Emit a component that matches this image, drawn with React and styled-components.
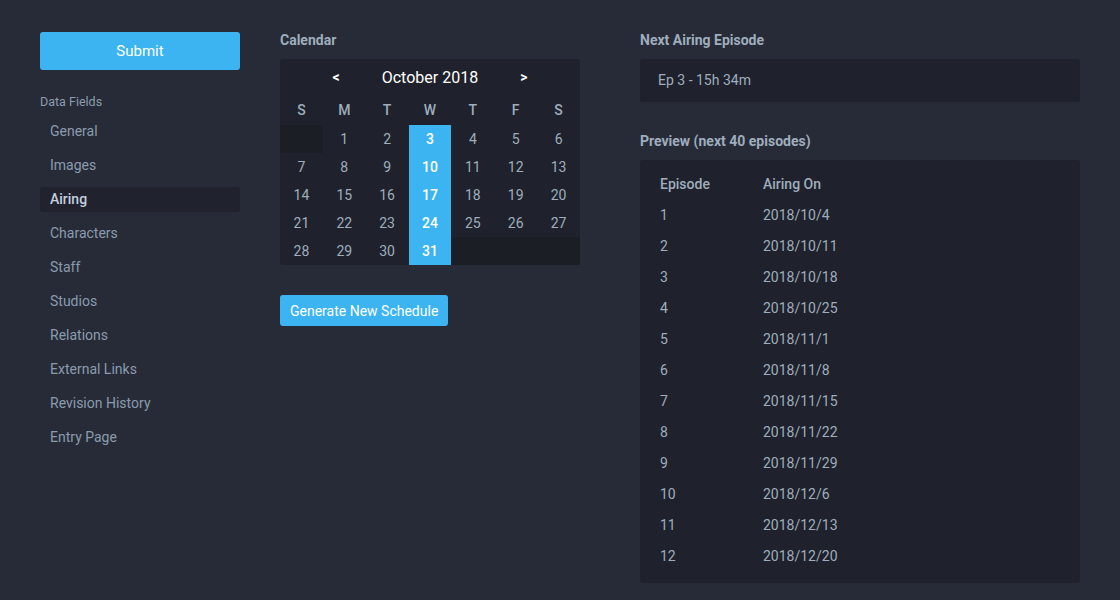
import React from "react";
import styled, { createGlobalStyle } from "styled-components";

const GlobalStyle = createGlobalStyle`
  body {
    margin: 0;
    background: #272b37;
    font-family: Roboto, "Liberation Sans", sans-serif;
    color: #9fadbd;
  }
`;

const Page = styled.div`
  display: flex;
  align-items: flex-start;
  padding: 32px 40px 0;
  height: 600px;
  box-sizing: border-box;
`;

const Column = styled.div`
  display: flex;
  flex-direction: column;
  width: ${(p) => p.$w};
  margin-right: ${(p) => p.$mr || "0"};
  flex-shrink: 0;
`;

const BlueButton = styled.button`
  border: none;
  background: #3db4f2;
  color: #fff;
  font-family: inherit;
  border-radius: 3px;
  cursor: pointer;
  font-size: ${(p) => (p.$big ? "15px" : "14px")};
  height: ${(p) => (p.$big ? "38px" : "31px")};
  padding: 0 10px;
  width: ${(p) => (p.$big ? "100%" : "auto")};
  align-self: flex-start;
`;

const SectionLabel = styled.div`
  font-size: 12.5px;
  margin: 24px 0 10px;
  color: #8a9bae;
`;

const NavItem = styled.div`
  height: 25px;
  line-height: 25px;
  margin-bottom: 9px;
  padding-left: 10px;
  font-size: 14px;
  border-radius: 3px;
  color: ${(p) => (p.$active ? "#c6cfe0" : "#8a9bae")};
  font-weight: ${(p) => (p.$active ? 500 : 400)};
  background: ${(p) => (p.$active ? "#20232d" : "transparent")};
`;

const Heading = styled.div`
  font-size: 14px;
  font-weight: 700;
  color: #9fadbd;
  height: 17px;
  line-height: 17px;
  margin-bottom: 10px;
`;

const Calendar = styled.div`
  background: #1f222c;
  border-radius: 3px;
  overflow: hidden;
  margin-bottom: 30px;
`;

const CalHeader = styled.div`
  display: flex;
  align-items: center;
  justify-content: center;
  height: 36px;
  color: #fff;
  font-size: 16px;
  gap: 42px;
`;

const Arrow = styled.span`
  font-weight: 700;
  font-size: 14px;
`;

const Grid = styled.div`
  display: grid;
  grid-template-columns: repeat(7, 1fr);
`;

const DayName = styled.div`
  height: 30px;
  line-height: 30px;
  text-align: center;
  font-size: 14px;
  font-weight: 500;
`;

const Cell = styled.div`
  height: 28px;
  line-height: 28px;
  text-align: center;
  font-size: 14px;
  background: ${(p) => (p.$hl ? "#3db4f2" : p.$empty ? "#1b1e25" : "transparent")};
  color: ${(p) => (p.$hl ? "#fff" : "#9fadbd")};
  font-weight: ${(p) => (p.$hl ? 500 : 400)};
`;

const Card = styled.div`
  background: #1f222c;
  border-radius: 3px;
  padding: ${(p) => p.$pad};
  margin-bottom: ${(p) => p.$mb || "0"};
  font-size: 14px;
  line-height: 19px;
`;

const Row = styled.div`
  display: grid;
  grid-template-columns: 103px 1fr;
  height: 31px;
  line-height: 31px;
  font-size: 14px;
  font-weight: ${(p) => (p.$head ? 500 : 400)};
`;

const navItems = [
  "General",
  "Images",
  "Airing",
  "Characters",
  "Staff",
  "Studios",
  "Relations",
  "External Links",
  "Revision History",
  "Entry Page",
];

const days = ["S", "M", "T", "W", "T", "F", "S"];

const cells = [null];
for (let d = 1; d <= 31; d++) cells.push(d);
while (cells.length < 35) cells.push(null);

const episodes = [
  "2018/10/4",
  "2018/10/11",
  "2018/10/18",
  "2018/10/25",
  "2018/11/1",
  "2018/11/8",
  "2018/11/15",
  "2018/11/22",
  "2018/11/29",
  "2018/12/6",
  "2018/12/13",
  "2018/12/20",
];

export default function App() {
  return (
    <>
      <GlobalStyle />
      <Page>
        <Column $w="200px" $mr="40px">
          <BlueButton $big>Submit</BlueButton>
          <SectionLabel>Data Fields</SectionLabel>
          {navItems.map((n) => (
            <NavItem key={n} $active={n === "Airing"}>
              {n}
            </NavItem>
          ))}
        </Column>

        <Column $w="300px" $mr="60px">
          <Heading>Calendar</Heading>
          <Calendar>
            <CalHeader>
              <Arrow>&lt;</Arrow>
              <span>October 2018</span>
              <Arrow>&gt;</Arrow>
            </CalHeader>
            <Grid>
              {days.map((d, i) => (
                <DayName key={i}>{d}</DayName>
              ))}
              {cells.map((c, i) => (
                <Cell key={i} $empty={c === null} $hl={c !== null && i % 7 === 3}>
                  {c}
                </Cell>
              ))}
            </Grid>
          </Calendar>
          <BlueButton>Generate New Schedule</BlueButton>
        </Column>

        <Column $w="440px">
          <Heading>Next Airing Episode</Heading>
          <Card $pad="12px 18px" $mb="31px">
            Ep 3 - 15h 34m
          </Card>
          <Heading>Preview (next 40 episodes)</Heading>
          <Card $pad="9px 20px 11px">
            <Row $head>
              <span>Episode</span>
              <span>Airing On</span>
            </Row>
            {episodes.map((e, i) => (
              <Row key={e}>
                <span>{i + 1}</span>
                <span>{e}</span>
              </Row>
            ))}
          </Card>
        </Column>
      </Page>
    </>
  );
}
